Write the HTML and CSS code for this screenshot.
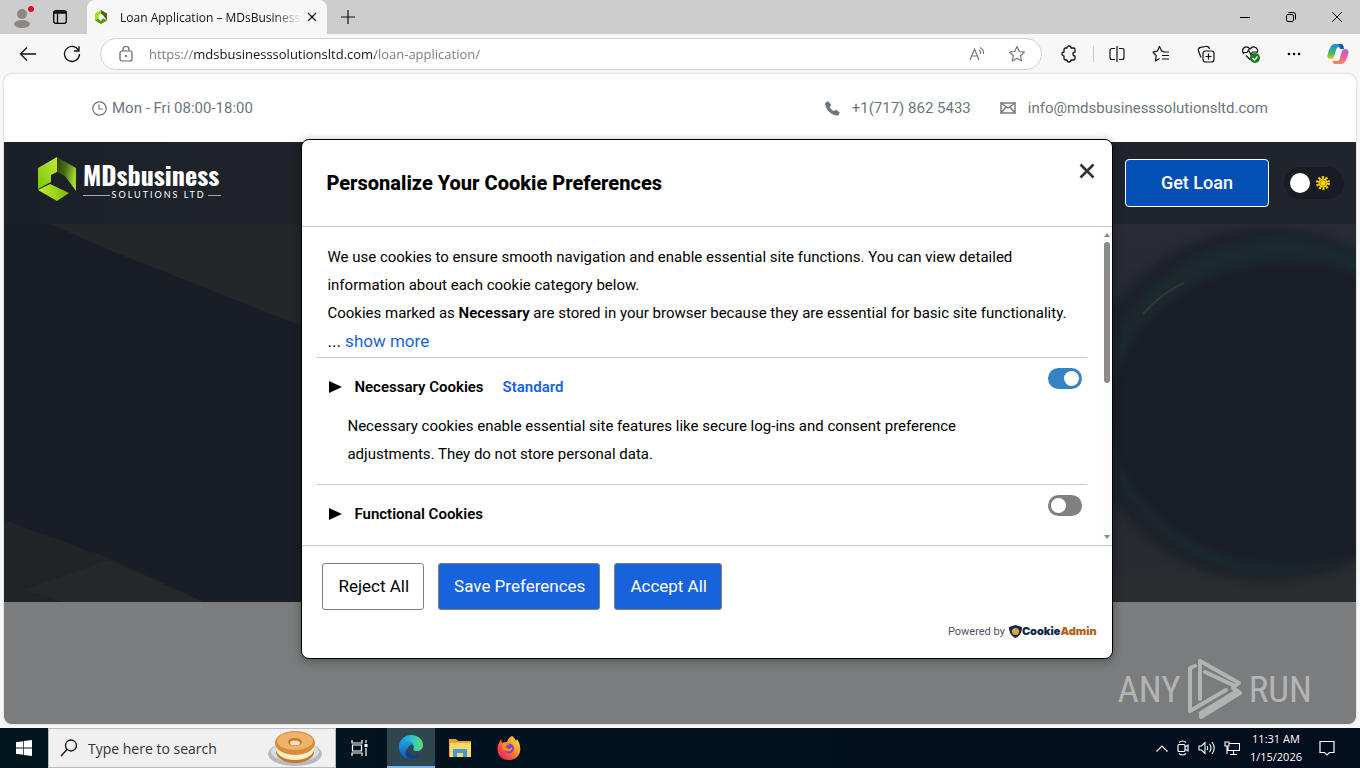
FILE: index.html
```
<!DOCTYPE html>
<html lang="en">
	<head>
		<meta charset="utf-8">
		<meta name="viewport" content="width=device-width, initial-scale=1.0">
		<title>Loan Application – MDsBusinesssolutions</title>
		<link rel="stylesheet" href="styles.css">
	</head>
	<body>
		<!-- tabs -->
		<div class="titlebar">
			<button class="icon-btn profile" aria-label="Profile">
				<svg width="24" height="26" viewBox="0 0 24 26"><circle cx="11" cy="10" r="5" fill="#8e8885"/><ellipse cx="11" cy="20" rx="8" ry="4" fill="#8e8885"/><circle cx="20" cy="5" r="4" fill="#e8c8c8"/><circle cx="20" cy="5" r="3" fill="#d3122c"/></svg>
			</button>
			<button class="icon-btn workspaces" aria-label="Tab actions">
				<svg width="14" height="14" viewBox="0 0 14 14" fill="none" stroke="#000" stroke-width="1.3"><rect x=".7" y=".7" width="12.6" height="12.6" rx="2"/><path d="M1 2.5h12" stroke-width="2.4"/><path d="M4.5 4v9"/></svg>
			</button>
			<div class="tab">
				<svg width="12" height="14" viewBox="0 0 38 44"><path d="M19 0 0 11v22l12-8v-9l7-4z" fill="#a6dd1a"/><path d="M19 0l19 11v22L26 17l-7-5z" fill="#456b13"/><path d="M0 33l19 11 19-11-12-7-7 9-9-8z" fill="#5d9415"/></svg>
				<span class="tab-title">Loan Application – MDsBusinesss</span>
				<button class="icon-btn" aria-label="Close tab">
					<svg width="10" height="10" viewBox="0 0 10 10" stroke="#111" stroke-width="1.2"><path d="M1 1l8 8M9 1L1 9"/></svg>
				</button>
			</div>
			<button class="icon-btn new-tab" aria-label="New tab">
				<svg width="14" height="14" viewBox="0 0 14 14" stroke="#111" stroke-width="1.2"><path d="M7 0v14M0 7h14"/></svg>
			</button>
			<div class="window-buttons">
				<button class="icon-btn" aria-label="Minimize"><svg width="12" height="12" viewBox="0 0 12 12" stroke="#000"><path d="M1 6.500h10"/></svg></button>
				<button class="icon-btn" aria-label="Restore"><svg width="12" height="12" viewBox="0 0 12 12" fill="none" stroke="#000"><rect x="1.500" y="3.500" width="7" height="7" rx="1.500"/><path d="M3.500 1.500h5a2 2 0 0 1 2 2v5"/></svg></button>
				<button class="icon-btn" aria-label="Close"><svg width="12" height="12" viewBox="0 0 12 12" stroke="#000"><path d="M1 1l10 10M11 1L1 11"/></svg></button>
			</div>
		</div>

		<!-- toolbar -->
		<div class="toolbar">
			<button class="icon-btn" aria-label="Back"><svg width="18" height="16" viewBox="0 0 18 16" fill="none" stroke="#111" stroke-width="1.3"><path d="M17 8H2M8 1.500L1.500 8 8 14.500"/></svg></button>
			<button class="icon-btn" aria-label="Refresh"><svg width="18" height="18" viewBox="0 0 18 18" fill="none" stroke="#111" stroke-width="1.3"><path d="M16.500 9A7.500 7.500 0 1 1 15.500 5.200M16 1v5h-5"/></svg></button>
			<div class="address">
				<svg width="14" height="16" viewBox="0 0 14 16" fill="none" stroke="#666" stroke-width="1.200"><rect x="1" y="5" width="12" height="10" rx="2"/><path d="M4 5V3.500a3 3 0 0 1 6 0V5"/><circle cx="7" cy="10" r=".5" fill="#666"/></svg>
				<input type="text" class="url" aria-label="Address" value="https://mdsbusinesssolutionsltd.com/loan-application/">
				<button class="icon-btn" aria-label="Read aloud"><svg width="16" height="16" viewBox="0 0 16 16" fill="none" stroke="#777" stroke-width="1.200"><path d="M1 14L5.500 3 10 14M2.800 10h5.500M10 4q2 1 1.500 4M11 1.500q4 2 3.500 6.500"/></svg></button>
				<button class="icon-btn" aria-label="Add to favorites"><svg width="18" height="18" viewBox="0 0 18 18" fill="none" stroke="#777" stroke-width="1.200" stroke-linejoin="round"><path d="M9 1.500l2.300 5 5.200.6-3.900 3.600 1.100 5.300L9 13.300 4.300 16l1.100-5.300L1.500 7.100l5.200-.6z"/></svg></button>
			</div>
			<div class="tools">
				<button class="icon-btn" aria-label="Extensions"><svg width="18" height="18" viewBox="0 0 18 18" fill="none" stroke="#111" stroke-width="1.300" stroke-linejoin="round"><path d="M5.500 3H7a2 2 0 0 1 4 0h2.500a1.500 1.500 0 0 1 1.500 1.500V7a2 2 0 0 0 0 4v2.500a1.500 1.500 0 0 1-1.500 1.500H11a2 2 0 0 1-4 0H5.500A1.500 1.500 0 0 1 4 13.500V11a2 2 0 0 1 0-4V4.500A1.500 1.500 0 0 1 5.500 3z"/></svg></button>
				<span class="divider"></span>
				<button class="icon-btn" aria-label="Split screen"><svg width="16" height="16" viewBox="0 0 16 16" fill="none" stroke="#111" stroke-width="1.200"><path d="M6 2.500H3a2 2 0 0 0-2 2v7a2 2 0 0 0 2 2h3M8 0v16M10 2.500h3a2 2 0 0 1 2 2v7a2 2 0 0 1-2 2h-3"/></svg></button>
				<button class="icon-btn" aria-label="Favorites"><svg width="20" height="18" viewBox="0 0 20 18" fill="none" stroke="#111" stroke-width="1.200" stroke-linejoin="round"><path d="M13 6.500l-2.200-.3L8.500 1.500 6.300 6.200 2 7l3.200 3.600L4.500 16l4-2.500M12 7h6M11 10.500h7M11 14h7"/></svg></button>
				<button class="icon-btn" aria-label="Collections"><svg width="18" height="18" viewBox="0 0 18 18" fill="none" stroke="#111" stroke-width="1.200"><rect x="6" y="6" width="11" height="11" rx="2.500"/><path d="M11.500 8.500v6M8.500 11.500h6M4 12.500L1.500 6Q.8 3 3.500 2.300L9 1.500q3-.3 3.500 2.500"/></svg></button>
				<button class="icon-btn" aria-label="Browser essentials"><svg width="20" height="18" viewBox="0 0 20 18" fill="none" stroke="#111" stroke-width="1.200"><path d="M3 9Q0 5.500 3 2.800 6 .5 9 4q3-3.500 6-1.200 2.800 2.500 1 5M5 10.500l4.500 4.500M2 7.500h4l1.500-2.500L10 10l1.500-3H16"/><circle cx="14" cy="13" r="5" fill="#15801b" stroke="none"/><path d="M11.500 13l2 2 3-3.500" stroke="#fff"/></svg></button>
				<button class="icon-btn" aria-label="Settings and more"><svg width="14" height="4" viewBox="0 0 14 4"><circle cx="2" cy="2" r="1.300"/><circle cx="7" cy="2" r="1.300"/><circle cx="12" cy="2" r="1.300"/></svg></button>
				<button class="icon-btn" aria-label="Copilot">
					<svg width="22" height="22" viewBox="0 0 22 22">
						<defs>
							<linearGradient id="cpA" x1="0" y1="0" x2="0" y2="1"><stop offset="0" stop-color="#1b8fe0"/><stop offset=".6" stop-color="#3bb873"/><stop offset="1" stop-color="#f2c811"/></linearGradient>
							<linearGradient id="cpB" x1="0" y1="0" x2="0" y2="1"><stop offset="0" stop-color="#a667e8"/><stop offset=".5" stop-color="#ee5c93"/><stop offset="1" stop-color="#fb8a54"/></linearGradient>
						</defs>
						<path d="M8 1h6q2 0 2.500 3H12q-2 0-2.600 2L7 14q-.6 2-3 2-4 0-3.500-4Q2 6 4 3 5.200 1 8 1z" fill="url(#cpA)"/>
						<path d="M14 21H8q-2 0-2.500-3H10q2 0 2.600-2L15 8q.6-2 3-2 4 0 3.500 4-1.500 6-3.500 9-1.200 2-4 2z" fill="url(#cpB)"/>
						<path d="M11 1h3q2 0 2.500 3l.5 2h-4q-1-4-2-5z" fill="#1457b5"/>
					</svg>
				</button>
			</div>
		</div>

		<div class="page">
			<div class="contact-bar">
				<span class="contact">
					<svg width="15" height="15" viewBox="0 0 15 15" fill="none" stroke="#6c757d" stroke-width="1.200"><circle cx="7.500" cy="7.500" r="6.700"/><path d="M7 3.500V8h4"/></svg>
					Mon - Fri 08:00-18:00
				</span>
				<a class="contact phone" href="tel:+17178625433">
					<svg width="15" height="15" viewBox="0 0 16 16"><path d="M3.500.8L.8 2C0 8 7 15.500 14 15l1.200-2.700-3.700-2.600-1.900 1.500C7.500 10.500 5.500 8.500 4.700 6.400l1.500-1.900z" fill="#6c757d" stroke="#6c757d" stroke-linejoin="round"/></svg>
					+1(717) 862 5433
				</a>
				<a class="contact mail" href="mailto:info@mdsbusinesssolutionsltd.com">
					<svg width="16" height="12" viewBox="0 0 16 12" fill="none" stroke="#6c757d" stroke-width="1.400"><rect x="1" y="1" width="14" height="10"/><path d="M1 1l7 5 7-5M1 11l5-6M15 11l-5-6"/></svg>
					info@mdsbusinesssolutionsltd.com
				</a>
			</div>

			<div class="site-header">
				<a class="logo" href="#">
					<svg width="38" height="44" viewBox="0 0 38 44">
						<defs>
							<linearGradient id="lgA" x1="0" y1="1" x2="1" y2="0"><stop offset="0" stop-color="#78c800"/><stop offset="1" stop-color="#c5e73c"/></linearGradient>
							<linearGradient id="lgB" x1="0" y1="0" x2="1" y2=".4"><stop offset="0" stop-color="#2b3d12"/><stop offset=".5" stop-color="#4b6d16"/><stop offset="1" stop-color="#a4d62b"/></linearGradient>
							<linearGradient id="lgC" x1="0" y1="0" x2="1" y2="0"><stop offset="0" stop-color="#c6ee31"/><stop offset="1" stop-color="#78bd04"/></linearGradient>
						</defs>
						<path d="M19 0v15l-6 3v7L0 32V11z" fill="url(#lgA)"/>
						<path d="M19 0l19 11v23L27 19l-8-4z" fill="url(#lgB)"/>
						<path d="M0 33l12-6 19 9-12 8z" fill="url(#lgC)"/>
					</svg>
					<span class="logo-text">
						<strong>MDsbusiness</strong>
						<small>SOLUTIONS LTD</small>
					</span>
				</a>
				<a class="get-loan" href="#">Get Loan</a>
				<label class="theme">
					<input type="checkbox" aria-label="Light mode">
					<svg width="14" height="14" viewBox="0 0 14 14" fill="none"><circle cx="7" cy="7" r="5.500" stroke="#f5cb0c" stroke-width="3" stroke-dasharray="2 1.450"/><circle cx="7" cy="7" r="4.500" fill="#ffd600"/><circle cx="7" cy="7" r="3" stroke="#b28d05"/></svg>
				</label>
			</div>

			<div class="hero">
				<svg width="300" height="378" viewBox="0 0 300 378">
					<path d="M46 0h252v102L110 28z" fill="#23272a"/>
					<path d="M0 296l110 40 90 42H0z" fill="#202427"/>
					<path d="M20 366l84-30 96 42H60z" fill="#24282b"/>
				</svg>
				<svg width="244" height="378" viewBox="0 0 244 378">
					<defs>
						<linearGradient id="desk" x1="0" y1="0" x2="0" y2="1"><stop offset="0" stop-color="#292c33"/><stop offset=".6" stop-color="#232830"/><stop offset="1" stop-color="#2a2d30"/></linearGradient>
						<filter id="soft" color-interpolation-filters="sRGB"><feGaussianBlur stdDeviation="4"/></filter>
					</defs>
					<rect width="244" height="378" fill="url(#desk)"/>
					<ellipse cx="155" cy="180" rx="184" ry="176" fill="#1c2228" filter="url(#soft)"/>
					<ellipse cx="166" cy="182" rx="177" ry="169" fill="#1c292d" filter="url(#soft)"/>
					<ellipse cx="178" cy="190" rx="180" ry="152" fill="#1a1e26" filter="url(#soft)"/>
					<path d="M31 90q18-21 41-31" stroke="#32363a" stroke-width="2" fill="none"/>
				</svg>
			</div>
			<div class="below"></div>

			<!-- sandbox watermark -->
			<div class="watermark">
				<span>ANY</span>
				<svg width="56" height="62" viewBox="0 0 56 62" fill="none" stroke="#b2b4b4" stroke-width="4" stroke-linejoin="round" stroke-linecap="round"><path d="M13 41V3l39 22-4 3L18 14M8 8L3 10v43l36-21M14 59l39-24-7-5M14 59v-4l36-22"/></svg>
				<span>RUN</span>
			</div>

			<!-- cookie preferences -->
			<div class="modal" role="dialog" aria-labelledby="cookie-title">
				<div class="modal-header">
					<h2 id="cookie-title">Personalize Your Cookie Preferences</h2>
					<button class="icon-btn close" aria-label="Close">
						<svg width="16" height="16" viewBox="0 0 16 16" stroke="#333" stroke-width="2.600"><path d="M1.500 1.500l13 13M14.500 1.500l-13 13"/></svg>
					</button>
				</div>
				<div class="modal-body">
					<div class="modal-content">
						<div class="intro">
							We use cookies to ensure smooth navigation and enable essential site functions. You can view detailed information about each cookie category below.<br>
							Cookies marked as <b>Necessary</b> are stored in your browser because they are essential for basic site functionality.
							<div class="more">... <a href="#">show more</a></div>
						</div>
						<div class="category">
							<div class="category-head">
								<svg width="13" height="12" viewBox="0 0 13 12"><path d="M0 0l13 6-13 6z"/></svg>
								<label for="necessary">Necessary Cookies</label>
								<span class="standard">Standard</span>
								<input type="checkbox" class="switch" id="necessary" checked>
							</div>
							<p>Necessary cookies enable essential site features like secure log-ins and consent preference adjustments. They do not store personal data.</p>
						</div>
						<div class="category">
							<div class="category-head">
								<svg width="13" height="12" viewBox="0 0 13 12"><path d="M0 0l13 6-13 6z"/></svg>
								<label for="functional">Functional Cookies</label>
								<input type="checkbox" class="switch" id="functional">
							</div>
						</div>
					</div>
					<div class="scrollbar">
						<svg width="6" height="4" viewBox="0 0 6 4" fill="#888"><path d="M0 4l3-4 3 4z"/></svg>
						<div class="thumb"></div>
						<svg width="6" height="4" viewBox="0 0 6 4" fill="#888"><path d="M0 0l3 4 3-4z"/></svg>
					</div>
				</div>
				<div class="modal-footer">
					<div class="actions">
						<button class="btn">Reject All</button>
						<button class="btn primary">Save Preferences</button>
						<button class="btn primary">Accept All</button>
					</div>
					<div class="powered">
						Powered by
						<a href="#">
							<svg width="13" height="13" viewBox="0 0 13 13"><path d="M6.500 0L13 2c0 5-2 9-6.500 11C2 11 0 7 0 2z" fill="#13294b"/><circle cx="6.500" cy="6.500" r="3.600" fill="#d9a441"/></svg><span>Cookie</span><span class="admin">Admin</span>
						</a>
					</div>
				</div>
			</div>
		</div>

		<!-- taskbar -->
		<div class="taskbar">
			<button class="task start" aria-label="Start"><svg width="16" height="16" viewBox="0 0 16 16" fill="#fff"><path d="M0 2.200L7.300 1.200V7.600H0zM8 1.100L16 0V7.600H8zM0 8.400h7.300v6.400L0 13.800zM8 8.400h8V16l-8-1.100z"/></svg></button>
			<label class="search">
				<svg width="18" height="18" viewBox="0 0 18 18" fill="none" stroke="#111" stroke-width="1.300"><circle cx="11" cy="6.500" r="5.500"/><path d="M7 10.500L1 17"/></svg>
				<input type="text" placeholder="Type here to search">
				<svg width="54" height="36" viewBox="0 0 54 36">
					<ellipse cx="27" cy="24" rx="27" ry="12" fill="#b4bac0"/><ellipse cx="27" cy="22" rx="24" ry="10" fill="#d9dde0"/>
					<ellipse cx="27" cy="22" rx="19" ry="11" fill="#c9762b"/><ellipse cx="27" cy="19" rx="19" ry="11" fill="#fff0c8"/>
					<ellipse cx="27" cy="13" rx="20" ry="12" fill="#d98a3c"/><ellipse cx="27" cy="11" rx="18" ry="9" fill="#f0b268"/>
					<ellipse cx="27" cy="12" rx="7" ry="4" fill="#c17a35"/><ellipse cx="27" cy="13" rx="5" ry="2.500" fill="#f4dfbd"/>
				</svg>
			</label>
			<button class="task" aria-label="Task view"><svg width="18" height="16" viewBox="0 0 18 16" fill="none" stroke="#fff" stroke-width="1.200"><path d="M1 0v3h10V0M1 16v-3h10v3M1.500 5h9v6h-9zM15 0v3M15 8v8"/><path d="M13.500 4h3v3h-3z" fill="#fff" stroke="none"/></svg></button>
			<button class="task active" aria-label="Edge">
				<svg width="24" height="24" viewBox="0 0 24 24">
					<defs>
						<linearGradient id="edA" x1="0" y1="0" x2="1" y2="0"><stop offset="0" stop-color="#1591df"/><stop offset=".6" stop-color="#35c6c4"/><stop offset="1" stop-color="#62dd67"/></linearGradient>
						<linearGradient id="edB" x1="0" y1="0" x2="0" y2="1"><stop offset="0" stop-color="#1ba0e0"/><stop offset="1" stop-color="#0e58b4"/></linearGradient>
					</defs>
					<path d="M0 12C0 5 5 0 12 0c7 0 12 4.500 12 10 0 4-3 6-6 6-3 0-4.500-1-3.500-2.500C16 10 13 8 9 8c-5 0-9 3-9 4z" fill="url(#edA)"/>
					<path d="M0 12c0-4 4-7 9-6 3 .6 5 2 5.500 3.500C9 9 7 15 10 18.500c3 3.500 8 3.500 12 .5-2 3.500-6 5-10 5C5 24 0 19 0 12z" fill="url(#edB)"/>
					<path d="M8.500 13c-.5 6 6 9.500 13.500 6-3 4.500-8 5.500-11.500 4.500C6 22 5 16 8.500 13z" fill="#123f83"/>
				</svg>
			</button>
			<button class="task" aria-label="File Explorer"><svg width="22" height="20" viewBox="0 0 22 20"><path d="M0 1h7l2 2h13v16H0z" fill="#e5a824"/><path d="M1 5h21v14H1z" fill="#ffd968"/><path d="M4 19v-8h14v8h-4v-4H8v4z" fill="#3e9bd4"/></svg></button>
			<button class="task" aria-label="Firefox">
				<svg width="24" height="24" viewBox="0 0 24 24">
					<defs><linearGradient id="ff" x1="1" y1="0" x2="0" y2="1"><stop offset="0" stop-color="#fff04a"/><stop offset=".4" stop-color="#ff9826"/><stop offset=".75" stop-color="#ff3a4c"/><stop offset="1" stop-color="#e31587"/></linearGradient></defs>
					<path d="M15 0c2 1 3 3 4 5l1-2c6 8 4 21-8 21C3 24-1 17 1 9l3-6 1 4 5-1c1-3 3-5 5-6z" fill="url(#ff)"/>
					<circle cx="12" cy="12.500" r="5" fill="#7343d2"/><path d="M5 7c4-1 6 0 7 2-3 0-4 2-2 3 3 2 5-1 5-1 2 5-9 7-10-1z" fill="#ff8a24"/>
				</svg>
			</button>
			<div class="tray">
				<svg width="12" height="7" viewBox="0 0 12 7" fill="none" stroke="#fff" stroke-width="1.200"><path d="M.5 6.500L6 1l5.500 5.500"/></svg>
				<svg width="12" height="16" viewBox="0 0 12 16" fill="none" stroke="#fff" stroke-width="1.200"><rect x="1" y="4.500" width="7" height="7" rx="1"/><path d="M8 7l3-2v6L8 9M2 2.500Q5.500-.5 9 2.500M2 13.500q3.500 3 7 0"/></svg>
				<svg width="17" height="14" viewBox="0 0 17 14" fill="none" stroke="#fff" stroke-width="1.100"><path d="M1 5h2.500L7 1.500v11L3.500 9H1zM9 5q1.500 2 0 4M11.500 3q3 4 0 8M14 1q4.500 6 0 12"/></svg>
				<svg width="16" height="14" viewBox="0 0 16 14" fill="none" stroke="#fff" stroke-width="1.100"><path d="M5.500 2.500h10v7H4V6M9.500 10v3.500M6 13.500h7M1 1h4v4H1zM3 5v8"/></svg>
				<div class="clock"><span>11:31 AM</span><span>1/15/2026</span></div>
				<svg width="16" height="16" viewBox="0 0 16 16" fill="none" stroke="#fff" stroke-width="1.200"><path d="M1 1.500h14v11h-4.500L8 15l-2.500-2.500H1z"/></svg>
			</div>
		</div>
	</body>
</html>
```
FILE: styles.css
```
* {
	box-sizing: border-box;
}
body {
	margin: 0;
	height: 100vh;
	display: flex;
	flex-direction: column;
	overflow: hidden;
	background-color: #f7f7f7;
	font-family: "Open Sans", "Noto Sans", sans-serif;
}
button, input {
	font-family: inherit;
}
svg {
	display: block;
	flex-shrink: 0;
}
a {
	text-decoration: none;
}
.icon-btn {
	display: flex;
	align-items: center;
	justify-content: center;
	padding: 0;
	border: none;
	background: none;
}

/* tabs */
.titlebar {
	display: flex;
	align-items: center;
	height: 34px;
	background-color: #cdcdcd;
}
.profile {
	padding-left: 11px;
}
.workspaces {
	margin-left: 18px;
}
.tab {
	display: flex;
	align-items: center;
	align-self: stretch;
	width: 240px;
	margin-left: 20px;
	padding: 0 10px 0 8px;
	border-radius: 8px 8px 0 0;
	background-color: #f7f7f7;
}
.tab-title {
	flex: 1;
	margin: 0 0 0 13px;
	white-space: nowrap;
	font-size: 12px;
	color: #111;
	mask-image: linear-gradient(to right, #000 82%, transparent 97%);
}
.new-tab {
	margin-left: 14px;
}
.window-buttons {
	display: flex;
	gap: 34px;
	margin-left: auto;
	padding-right: 17px;
}

/* toolbar */
.toolbar {
	display: flex;
	align-items: center;
	height: 40px;
	padding: 0 11px 0 19px;
	gap: 26px;
}
.address {
	display: flex;
	align-items: center;
	flex: 1;
	height: 32px;
	margin-left: -7px;
	padding: 0 15px 0 18px;
	gap: 23px;
	border: 1px solid #d2d2d2;
	border-radius: 16px;
	background-color: #fff;
}
.url {
	flex: 1;
	min-width: 0;
	margin-left: -7px;
	padding: 0;
	border: none;
	outline: none;
	font-size: 13px;
	/* host part is darker than the rest of the address */
	background: linear-gradient(to right, #767676 45px, #111 45px 226px, #767676 226px);
	-webkit-background-clip: text;
	background-clip: text;
	-webkit-text-fill-color: transparent;
}
.tools {
	display: flex;
	align-items: center;
	gap: 26px;
	margin-left: -8px;
}
.divider {
	width: 1px;
	height: 16px;
	margin: 0 -11px;
	background-color: #c8c8c8;
}

/* web page */
.page {
	position: relative;
	display: flex;
	flex: 1;
	flex-direction: column;
	min-height: 0;
	margin: 0 4px 4px;
	border-radius: 8px;
	overflow: hidden;
	background-color: #fff;
	box-shadow: 0 0 2px #aaa;
	font-family: Roboto, sans-serif;
}
.contact-bar {
	display: flex;
	align-items: center;
	height: 68px;
	padding: 0 88px;
}
.contact {
	display: flex;
	align-items: center;
	gap: 5px;
	font-size: 15px;
	color: #6c757d;
}
.phone {
	margin-left: auto;
	gap: 12px;
}
.mail {
	margin-left: 29px;
	gap: 12px;
}
.site-header {
	display: flex;
	align-items: center;
	height: 82px;
	padding: 0 12px 0 34px;
	background: linear-gradient(to right, #1b1f28, #1f2329 20%, #20242c);
}
.logo {
	display: flex;
	align-items: center;
	gap: 7px;
	margin-bottom: 8px;
	color: #fff;
}
.logo-text {
	display: flex;
	flex-direction: column;
	width: 138px;
	padding-top: 2px;
}
.logo-text strong {
	font-family: "Oswald", "Roboto Condensed", Roboto, sans-serif;
	font-size: 26px;
	line-height: 30px;
}
.logo-text small {
	display: flex;
	align-items: center;
	gap: 2px;
	font-family: Lato, sans-serif;
	font-size: 9px;
	line-height: 10px;
	letter-spacing: 2px;
	white-space: nowrap;
}
.logo-text small::before {
	content: "";
	flex: 2;
	height: 1px;
	background-color: #aaa;
}
.logo-text small::after {
	content: "";
	flex: 1;
	height: 1px;
	background-color: #aaa;
}
.get-loan {
	margin-left: auto;
	padding: 0 35px;
	border: 1px solid #fff;
	border-radius: 4px;
	background-color: #034fb3;
	font-size: 18px;
	font-weight: 500;
	line-height: 46px;
	color: #fff;
}
.theme {
	display: flex;
	align-items: center;
	gap: 6px;
	width: 60px;
	height: 32px;
	margin-left: 15px;
	padding-left: 6px;
	border-radius: 16px;
	background-color: #191c22;
}
.theme input {
	appearance: none;
	width: 20px;
	height: 20px;
	margin: 0;
	border-radius: 50%;
	background-color: #fff;
}
.hero {
	display: flex;
	justify-content: space-between;
	height: 378px;
	overflow: hidden;
	background-color: #191e26;
}
.below {
	flex: 1;
	background-color: #7a7c7d;
}
.watermark {
	position: absolute;
	right: 44px;
	bottom: 4px;
	display: flex;
	align-items: center;
	gap: 6px;
	font-family: "Roboto Condensed", Roboto, sans-serif;
	font-size: 37px;
	color: #b2b4b4;
}

/* cookie modal */
.modal {
	position: absolute;
	top: 10%;
	left: 22%;
	display: flex;
	flex-direction: column;
	width: 60%;
	height: 80%;
	border: 1px solid #000;
	border-radius: 8px;
	background-color: #fff;
	box-shadow: 0 2px 10px rgba(0, 0, 0, 0.35);
	color: #000;
}
.modal-header {
	display: flex;
	align-items: center;
	justify-content: space-between;
	height: 87px;
	padding: 0 17px 0 24px;
	border-bottom: 1px solid #c8c8c8;
}
h2 {
	margin: 0;
	font-size: 20px;
	font-weight: 800;
}
.close {
	margin-bottom: 24px;
}
.modal-body {
	display: flex;
	flex: 1;
	min-height: 0;
}
.modal-content {
	flex: 1;
	padding: 16px 16px 0 15px;
	overflow: hidden;
	font-size: 15px;
	line-height: 28px;
}
.intro {
	padding: 0 10px 2px;
}
b {
	font-weight: 600;
}
.more, .more a {
	font-size: 17px;
}
.more a, .standard {
	color: #1863dc;
}
.category {
	padding: 10px 5px 0 12px;
	height: 127px;
	border-top: 1px solid #c8c8c8;
}
.category-head {
	display: flex;
	align-items: center;
	height: 38px;
	font-weight: 600;
}
.category-head label {
	margin-left: 12px;
}
.standard {
	margin-left: 19px;
}
.switch {
	appearance: none;
	align-self: flex-start;
	width: 34px;
	height: 21px;
	margin: 0 0 0 auto;
	padding: 3px;
	border-radius: 11px;
	background-color: #808080;
}
.switch::before {
	content: "";
	display: block;
	width: 15px;
	height: 15px;
	border-radius: 50%;
	background-color: #fff;
}
.switch:checked {
	background-color: #3582c4;
}
.switch:checked::before {
	margin-left: auto;
}
.category p {
	margin: 6px 0 0;
	padding: 0 100px 0 18px;
}
.scrollbar {
	display: flex;
	flex-direction: column;
	align-items: center;
	width: 9px;
	padding: 6px 0;
	background-color: #fcfcfc;
}
.thumb {
	width: 6px;
	height: 141px;
	margin: 5px 0 auto;
	border-radius: 3px;
	background-color: #8b8b8b;
}
.modal-footer {
	height: 113px;
	padding: 17px 15px 0 20px;
	border-top: 1px solid #c8c8c8;
}
.actions {
	display: flex;
	gap: 14px;
}
.btn {
	height: 47px;
	padding: 0 14px 2px 15px;
	border: 1px solid #808080;
	border-radius: 3px;
	background-color: #fff;
	font-size: 17px;
	color: #000;
}
.primary {
	background-color: #1863dc;
	color: #fff;
}
.powered {
	display: flex;
	align-items: center;
	justify-content: flex-end;
	gap: 4px;
	margin-top: 14px;
	font-size: 11px;
	color: #4c5064;
}
.powered a {
	display: flex;
	align-items: center;
	font-family: Inter, sans-serif;
	font-size: 11px;
	font-weight: 900;
	color: #13294b;
}
.powered .admin {
	color: #b0621b;
}

/* taskbar */
.taskbar {
	display: flex;
	height: 40px;
	background: linear-gradient(to right, #02161f, #020d1d);
}
.task {
	display: flex;
	align-items: center;
	justify-content: center;
	width: 48px;
	margin-right: 1px;
	padding: 0;
	border: none;
	background: none;
}
.start {
	margin: 0;
}
.active {
	margin-left: 2px;
	border-bottom: 2px solid #76b9ed;
	background-color: #30464e;
}
.search {
	display: flex;
	align-items: center;
	width: 288px;
	padding: 0 13px 0 11px;
	border: 1px solid #b8b8b8;
	background-color: #f0f0f0;
}
.search input {
	flex: 1;
	min-width: 0;
	padding: 0 0 0 10px;
	border: none;
	outline: none;
	background: none;
	font-size: 14px;
}
.search input::placeholder {
	color: #333;
}
.tray {
	display: flex;
	align-items: center;
	gap: 9px;
	margin-left: auto;
	padding-right: 25px;
	color: #fff;
}
.clock {
	display: flex;
	flex-direction: column;
	align-items: center;
	margin: 0 8px 0 1px;
	font-size: 11px;
	line-height: 18px;
}
```
